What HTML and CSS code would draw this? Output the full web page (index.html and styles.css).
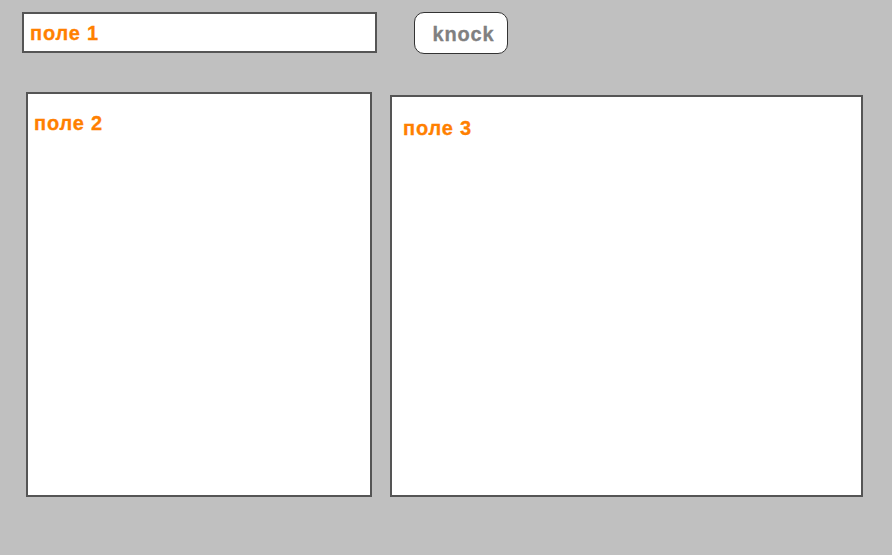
FILE: index.html
```html
<!DOCTYPE html>
<html>
<head>
<meta charset="utf-8">
<link rel="stylesheet" href="styles.css">
</head>
<body>
<div class="page">
  <div class="top">
    <div class="field field1"><span class="label">поле 1</span></div>
    <div class="btn">knock</div>
  </div>
  <div class="bottom">
    <div class="field field2"><span class="label">поле 2</span></div>
    <div class="field field3"><span class="label">поле 3</span></div>
  </div>
</div>
</body>
</html>
```
FILE: styles.css
```css
html, body {
  margin: 0;
  padding: 0;
  background: #c0c0c0;
}
.page {
  width: 892px;
  height: 555px;
  font-family: "Liberation Sans", Arial, sans-serif;
}
.top {
  display: flex;
  align-items: flex-start;
  padding: 12px 0 0 22px;
}
.field {
  box-sizing: border-box;
  background: #fff;
  border: 2px solid #555;
}
.label {
  display: block;
  color: #ff8000;
  font-weight: bold;
  font-size: 20px;
  line-height: 20px;
  letter-spacing: 0.8px;
  -webkit-text-stroke: 0.3px #ff8000;
}
.field1 {
  width: 355px;
  height: 41px;
  padding: 9px 0 0 6px;
}
.btn {
  box-sizing: border-box;
  margin-left: 37px;
  width: 94px;
  height: 42px;
  border: 1px solid #333;
  border-radius: 10px;
  background: #fff;
  color: #808080;
  font-weight: bold;
  font-size: 20px;
  letter-spacing: 0.8px;
  -webkit-text-stroke: 0.3px #808080;
  display: flex;
  align-items: center;
  justify-content: center;
  padding: 2px 0 0 5px;
}
.bottom {
  display: flex;
  align-items: flex-end;
  padding: 0 0 0 26px;
  margin-top: 38px;
  gap: 18px;
}
.field2 {
  width: 346px;
  height: 405px;
  padding: 19px 0 0 6px;
}
.field3 {
  width: 473px;
  height: 402px;
  padding: 21px 0 0 11px;
}
```
